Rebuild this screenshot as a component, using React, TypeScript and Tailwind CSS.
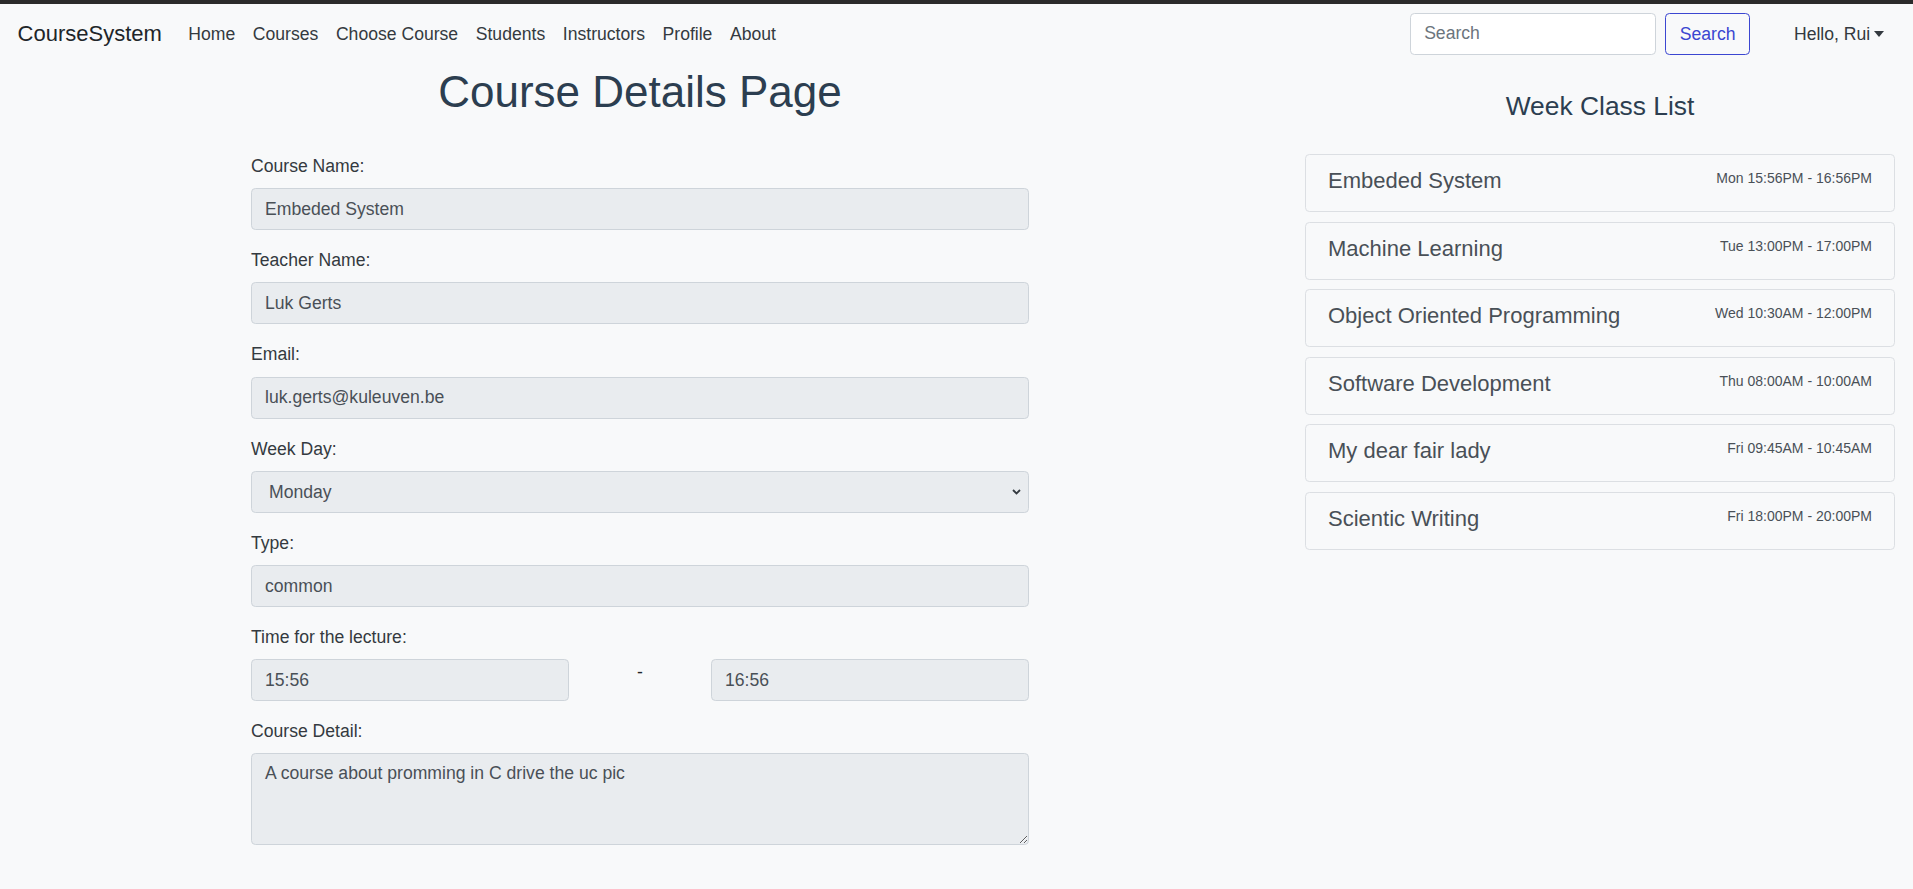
import { useState } from 'react'

const font = { fontFamily: '"Liberation Sans", Arial, sans-serif' }

const navLinks = ['Home', 'Courses', 'Choose Course', 'Students', 'Instructors', 'Profile', 'About']

const classes = [
  { name: 'Embeded System', time: 'Mon 15:56PM - 16:56PM' },
  { name: 'Machine Learning', time: 'Tue 13:00PM - 17:00PM' },
  { name: 'Object Oriented Programming', time: 'Wed 10:30AM - 12:00PM' },
  { name: 'Software Development', time: 'Thu 08:00AM - 10:00AM' },
  { name: 'My dear fair lady', time: 'Fri 09:45AM - 10:45AM' },
  { name: 'Scientic Writing', time: 'Fri 18:00PM - 20:00PM' }
]

const inputCls =
  'block w-full h-[42px] px-[13px] text-[17.6px] text-[#495057] bg-[#e9ecef] border border-[#ced4da] rounded-[4.4px] outline-none'

function Field({ label, children }: { label: string; children: React.ReactNode }) {
  return (
    <div className="mb-[17px]">
      <label className="block mb-[8.8px] text-[17.6px] leading-[26.4px] text-[#343a40]">{label}</label>
      {children}
    </div>
  )
}

export default function App() {
  const [query, setQuery] = useState('')

  return (
    <div className="min-h-screen bg-[#f8f9fa]" style={font}>
      <div className="h-[4px] bg-[#2b2b2b]" />

      {/* navbar */}
      <nav className="flex items-center h-[59.6px] pl-[17.6px] pr-[20px]">
        <span className="text-[22px] leading-[33px] text-[#212529] mr-[17.6px]">CourseSystem</span>
        {navLinks.map((l) => (
          <a key={l} className="px-[8.8px] text-[17.6px] leading-[26.4px] text-[#343a40] cursor-pointer">
            {l}
          </a>
        ))}
        <input
          value={query}
          onChange={(e) => setQuery(e.target.value)}
          placeholder="Search"
          className="ml-auto w-[246px] h-[42px] px-[13px] text-[17.6px] text-[#495057] placeholder:text-[#6c757d] bg-white border border-[#ced4da] rounded-[4.4px] outline-none"
        />
        <button className="ml-[9px] w-[85px] h-[42px] text-[17.6px] text-[#3b46d1] border border-[#3b46d1] rounded-[4.4px]">
          Search
        </button>
        <a className="ml-[35px] px-[8.8px] flex items-center text-[17.6px] leading-[26.4px] text-[#343a40]">
          Hello, Rui
          <span className="ml-[4px] mt-[1px] w-0 h-0 border-t-[6px] border-t-[#343a40] border-x-[5px] border-x-transparent" />
        </a>
      </nav>

      <div className="flex">
        {/* left: form */}
        <div className="w-[1280px] flex-none">
          <h1 className="mt-[2px] mb-[34.6px] text-center text-[44px] leading-[52.8px] text-[#2c3e50]">
            Course Details Page
          </h1>
          <div className="w-[778px] mx-auto">
            <Field label="Course Name:">
              <input readOnly value="Embeded System" className={inputCls} />
            </Field>
            <Field label="Teacher Name:">
              <input readOnly value="Luk Gerts" className={inputCls} />
            </Field>
            <Field label="Email:">
              <input readOnly value="luk.gerts@kuleuven.be" className={inputCls} />
            </Field>
            <Field label="Week Day:">
              <div className="relative">
                <select
                  defaultValue="Monday"
                  className="block w-full h-[42px] pl-[17px] pr-[30px] text-[17.6px] text-[#495057] bg-[#e9ecef] border border-[#ced4da] rounded-[4.4px] outline-none appearance-none"
                >
                  {['Monday', 'Tuesday', 'Wednesday', 'Thursday', 'Friday'].map((d) => (
                    <option key={d}>{d}</option>
                  ))}
                </select>
                <svg
                  className="absolute right-[8px] top-[18px] pointer-events-none"
                  width="9"
                  height="6"
                  viewBox="0 0 9 6"
                  fill="none"
                >
                  <path d="M1 1l3.5 3.5L8 1" stroke="#343a40" strokeWidth="1.8" />
                </svg>
              </div>
            </Field>
            <Field label="Type:">
              <input readOnly value="common" className={inputCls} />
            </Field>
            <Field label="Time for the lecture:">
              <div className="flex items-start">
                <input readOnly value="15:56" className={`${inputCls} !w-[318px] flex-none`} />
                <div className="flex-1 text-center text-[17.6px] leading-[26.4px] text-[#212529]">-</div>
                <input readOnly value="16:56" className={`${inputCls} !w-[318px] flex-none`} />
              </div>
            </Field>
            <Field label="Course Detail:">
              <textarea
                readOnly
                value="A course about promming in C drive the uc pic"
                className="block w-full h-[92px] px-[13px] py-[6px] text-[17.6px] leading-[26.4px] text-[#495057] bg-[#e9ecef] border border-[#ced4da] rounded-[4.4px] outline-none resize-y"
              />
            </Field>
          </div>
        </div>

        {/* right: week class list */}
        <div className="flex-1 pl-[25px] pr-[18px]">
          <h4 className="mt-[27.4px] mb-[31.3px] text-center text-[26.4px] leading-[31.7px] text-[#2c3e50]">
            Week Class List
          </h4>
          <div className="flex flex-col gap-[9.6px]">
            {classes.map((c) => (
              <div
                key={c.name}
                className="h-[58px] flex justify-between items-start pt-[13px] px-[22px] border border-[#dcdfe3] rounded-[4.4px]"
              >
                <span className="text-[22px] leading-[26.4px] text-[#495057]">{c.name}</span>
                <span className="text-[14px] leading-[21px] text-[#495057]">{c.time}</span>
              </div>
            ))}
          </div>
        </div>
      </div>
    </div>
  )
}
